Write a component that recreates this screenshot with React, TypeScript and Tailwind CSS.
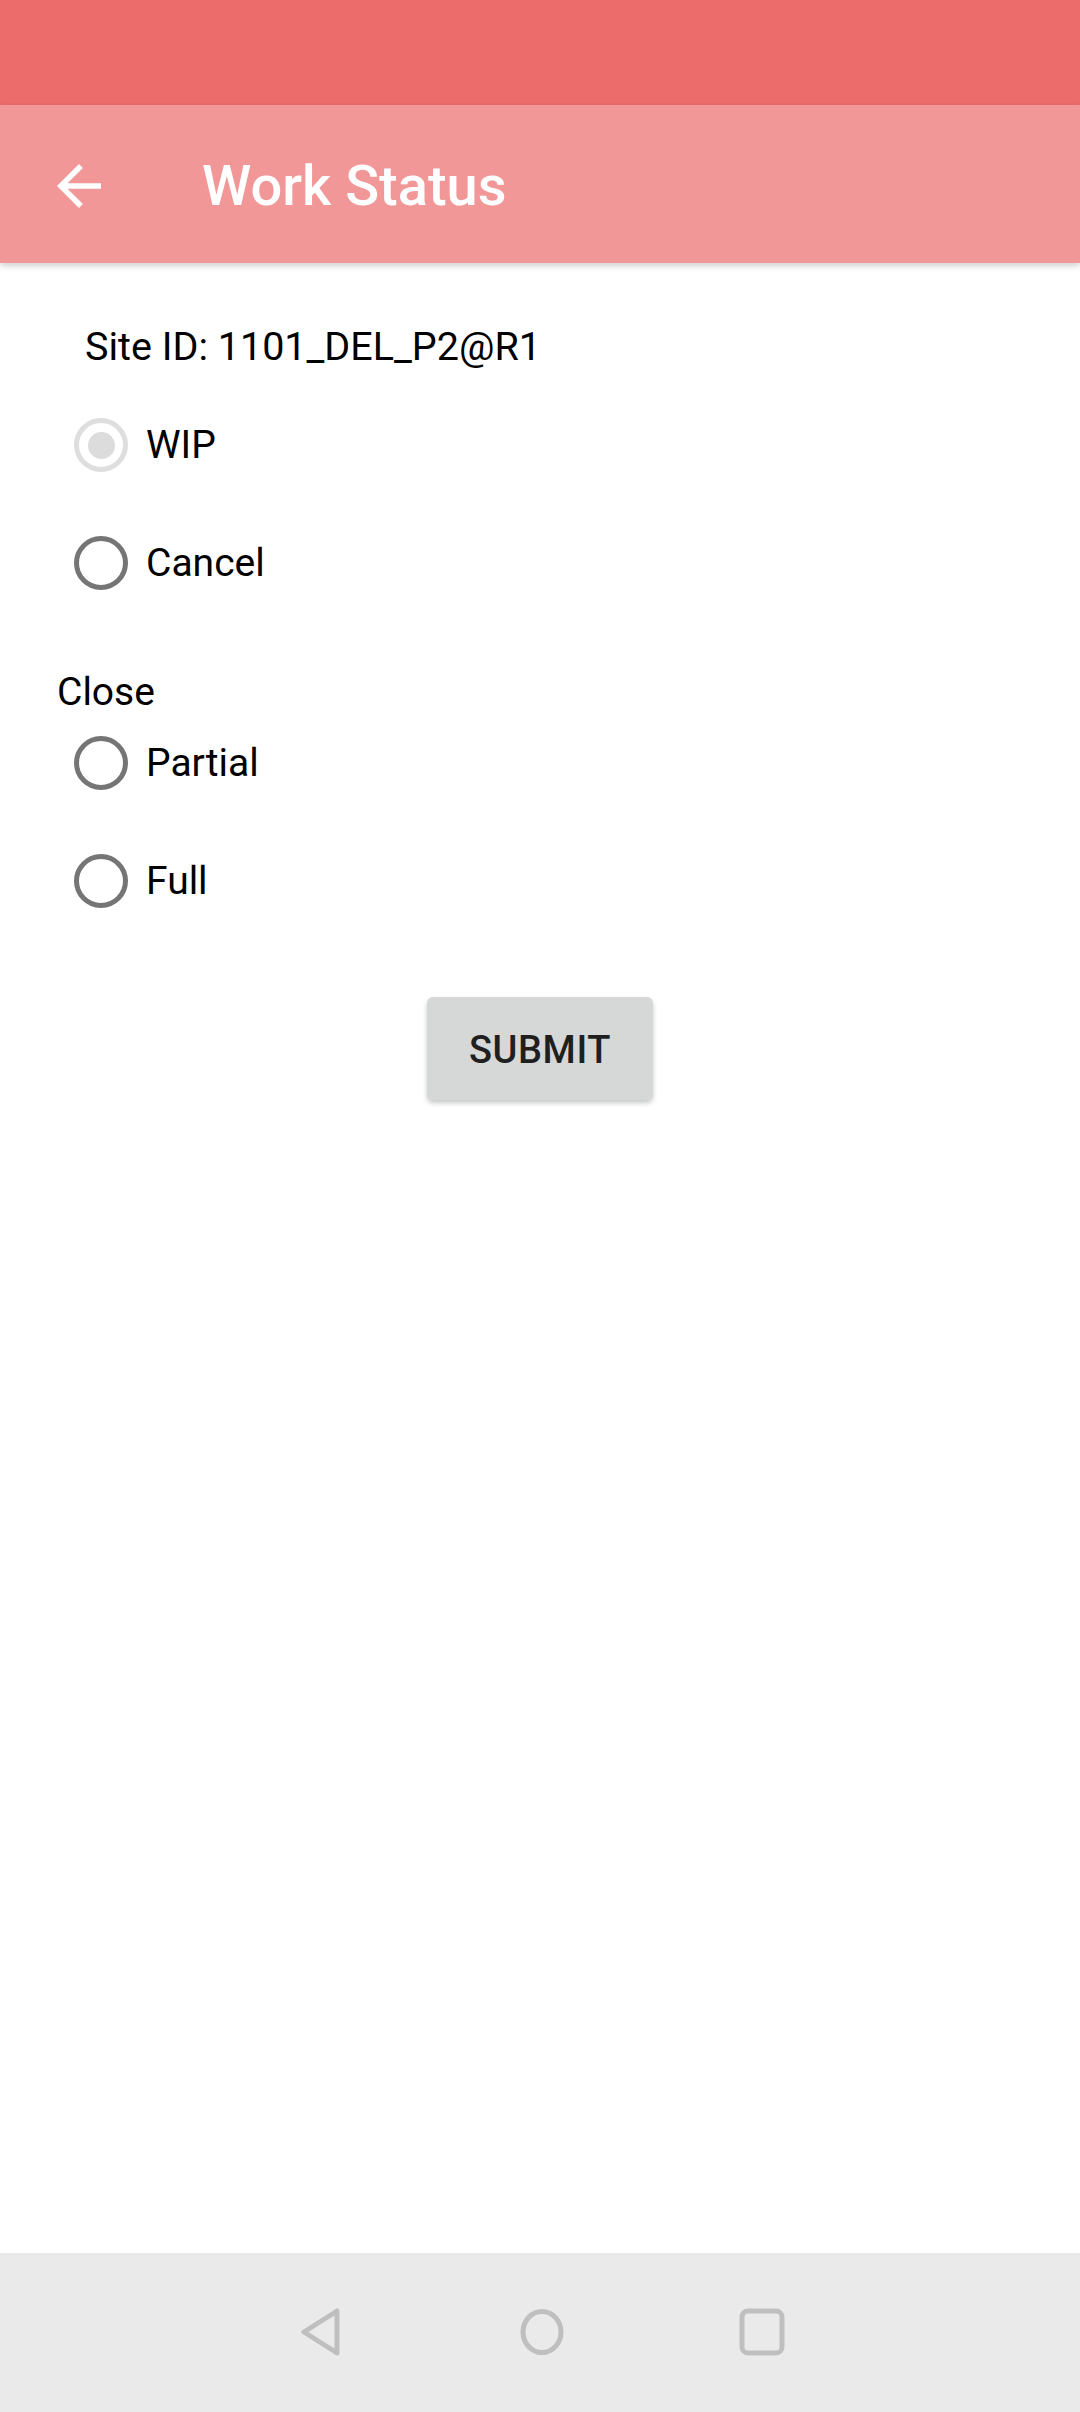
import React from "react";

type RadioProps = {
  label: string;
  checked?: boolean;
  disabled?: boolean;
  className?: string;
};

// Android-style radio row: 20dp ring, label to the right.
function Radio({ label, checked, disabled, className = "" }: RadioProps) {
  return (
    <div className={`flex h-[96px] items-center pl-[74px] ${className}`}>
      <span
        className={[
          "flex h-[54px] w-[54px] items-center justify-center rounded-full border-[5px]",
          disabled ? "border-[#dedede]" : "border-[#757575]",
        ].join(" ")}
      >
        {checked && (
          <span
            className={[
              "h-[27px] w-[27px] rounded-full",
              disabled ? "bg-[#dcdcdc]" : "bg-[#757575]",
            ].join(" ")}
          />
        )}
      </span>
      <span className="ml-[18px] text-[39px] leading-none text-black">{label}</span>
    </div>
  );
}

function NavBar() {
  return (
    <div className="flex h-[159px] items-center justify-center gap-[174px] bg-[#eaeaea] pb-[2px] pl-[4px]">
      <svg width="46" height="50" viewBox="0 0 46 50" fill="none">
        <path
          d="M38 4 L38 46 L5 25 Z"
          stroke="#bfbfbf"
          strokeWidth="5"
          strokeLinejoin="round"
        />
      </svg>
      <svg width="46" height="50" viewBox="0 0 46 50" fill="none">
        <ellipse cx="23" cy="25" rx="19" ry="20.5" stroke="#bfbfbf" strokeWidth="5" />
      </svg>
      <svg width="46" height="50" viewBox="0 0 46 50" fill="none">
        <rect x="3" y="4" width="40" height="42" rx="6" stroke="#bfbfbf" strokeWidth="5" />
      </svg>
    </div>
  );
}

export default function App() {
  return (
    <div className="flex h-[2412px] w-[1080px] flex-col bg-white font-['Roboto','Liberation_Sans',sans-serif]">
      <div className="h-[105px] bg-[#ec6b6b]" />

      <header className="relative z-10 flex h-[158px] items-center bg-[#f19797] pl-[46px] pt-[3px] shadow-[0_3px_6px_rgba(0,0,0,0.18)]">
        <svg width="66" height="66" viewBox="0 0 24 24" fill="#ffffff">
          <path d="M20 11H7.83l5.59-5.59L12 4l-8 8 8 8 1.41-1.41L7.83 13H20v-2z" />
        </svg>
        <h1 className="ml-[90px] text-[56px] font-medium leading-none text-white">Work Status</h1>
      </header>

      <main className="flex-1">
        <div className="mt-[61px] pl-[85px] text-[39.5px] leading-[46px] text-black">
          Site ID: 1101_DEL_P2@R1
        </div>

        <Radio label="WIP" checked disabled className="mt-[27px]" />
        <Radio label="Cancel" className="mt-[22px]" />

        <div className="mt-[58px] pl-[57px] text-[39px] leading-[46px] text-black">Close</div>

        <Radio label="Partial" />
        <Radio label="Full" className="mt-[22px]" />

        <div className="mt-[68px] flex justify-center">
          <button className="h-[103px] w-[226px] rounded-[6px] bg-[#d6d7d7] pt-[4px] text-[38px] font-medium tracking-[0.015em] text-[#1f1f1f] shadow-[0_3px_5px_rgba(0,0,0,0.22)]">
            SUBMIT
          </button>
        </div>
      </main>

      <NavBar />
    </div>
  );
}
